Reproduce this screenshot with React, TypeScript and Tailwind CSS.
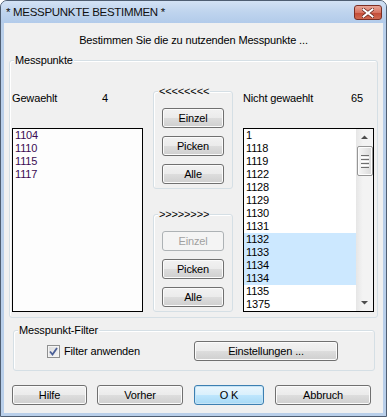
import React from "react";
import clsx from "clsx";

const font = "font-['Liberation_Sans',Arial,sans-serif]";

interface BtnProps {
  children: React.ReactNode;
  className?: string;
  disabled?: boolean;
  primary?: boolean;
}

const Btn = ({ children, className, disabled, primary }: BtnProps) => (
  <div
    className={clsx(
      "flex h-[20px] items-center justify-center rounded-[3px] border text-[11px] leading-none",
      disabled
        ? "border-[#adb2b5] bg-[#f4f4f4] text-[#a0a0a0]"
        : primary
          ? "border-[#3c7fb1] bg-[linear-gradient(180deg,#eaf6fd_0%,#d9f0fc_50%,#bee6fd_51%,#a7d9f5_100%)] text-black shadow-[inset_0_0_0_1px_#c6e4f6]"
          : "border-[#707070] bg-[linear-gradient(180deg,#f2f2f2_0%,#ebebeb_50%,#dddddd_51%,#cfcfcf_100%)] text-black shadow-[inset_0_0_0_1px_#fbfbfb]",
      className
    )}
  >
    {children}
  </div>
);

const Group = ({
  label,
  className,
  children,
}: {
  label: string;
  className?: string;
  children?: React.ReactNode;
}) => (
  <div
    className={clsx(
      "relative rounded-[3px] border border-[#d5dfe5] shadow-[inset_1px_1px_0_#ffffff]",
      className
    )}
  >
    <span className="absolute -top-[7px] left-[4px] bg-[#f0f0f0] px-[1px] text-[11px] leading-[13px] text-black">
      {label}
    </span>
    {children}
  </div>
);

const chosen = ["1104", "1110", "1115", "1117"];
const available = [
  "1", "1118", "1119", "1122", "1128", "1129", "1130", "1131",
  "1132", "1133", "1134", "1134", "1135", "1375",
];

const ArrowPair = ({ label }: { label: string }) => (
  <Group label={label} className="flex h-[98px] flex-col items-center gap-[8px] pt-[16px]">
    {label.startsWith(">") ? (
      <Btn disabled className="w-[62px]">Einzel</Btn>
    ) : (
      <Btn className="w-[62px]">Einzel</Btn>
    )}
    <Btn className="w-[62px]">Picken</Btn>
    <Btn className="w-[62px]">Alle</Btn>
  </Group>
);

const Scrollbar = () => (
  <div className="flex w-[17px] flex-col items-center bg-[linear-gradient(90deg,#e6e6e6_0%,#f3f3f3_40%,#f3f3f3_100%)]">
    <svg width="17" height="17" viewBox="0 0 17 17" className="shrink-0">
      <path d="M5 10 L8.5 6.5 L12 10 Z" fill="#4d4d4d" />
    </svg>
    <div className="flex h-[30px] w-[16px] flex-col items-center justify-center gap-[1px] rounded-[2px] border border-[#969696] bg-[linear-gradient(90deg,#f6f6f6_0%,#e8e8e8_50%,#d9d9d9_100%)] shadow-[inset_0_0_0_1px_#fdfdfd]">
      <div className="h-[1px] w-[8px] bg-[#6f6f6f]" />
      <div className="h-[1px] w-[8px] bg-[#ffffff]" />
      <div className="h-[1px] w-[8px] bg-[#6f6f6f]" />
      <div className="h-[1px] w-[8px] bg-[#ffffff]" />
      <div className="h-[1px] w-[8px] bg-[#6f6f6f]" />
      <div className="h-[1px] w-[8px] bg-[#ffffff]" />
      <div className="h-[1px] w-[8px] bg-[#6f6f6f]" />
    </div>
    <div className="flex-1" />
    <svg width="17" height="17" viewBox="0 0 17 17" className="shrink-0">
      <path d="M5 7 L8.5 10.5 L12 7 Z" fill="#4d4d4d" />
    </svg>
  </div>
);

export default function App() {
  return (
    <div
      className={clsx(
        "flex h-[417px] w-[387px] flex-col rounded-t-[7px] border border-[#4f5e72] bg-[#b9cfea] px-[3px] pb-[3px]",
        font
      )}
    >
      {/* Title bar */}
      <div className="-mx-[3px] flex h-[22px] items-start justify-between rounded-t-[6px] bg-[linear-gradient(180deg,#d3e2f4_0%,#bfd4ee_50%,#b2cbea_100%)] pl-[5px] pr-[4px]">
        <span className="mt-[4px] text-[11.5px] leading-[14px] tracking-[-0.3px] text-[#101010]">
          * MESSPUNKTE BESTIMMEN *
        </span>
        <div className="mt-[4px] flex h-[15px] w-[28px] items-center justify-center rounded-[3px] border border-[#7b2e24] bg-[linear-gradient(180deg,#e8a597_0%,#d77462_50%,#c34a36_51%,#cf6a52_100%)]">
          <svg width="12" height="10" viewBox="0 0 12 10">
            <path
              d="M1.5 1.5 L10.5 8.5 M10.5 1.5 L1.5 8.5"
              stroke="#5a1d16"
              strokeWidth="3.4"
              strokeLinecap="square"
            />
            <path
              d="M1.5 1.5 L10.5 8.5 M10.5 1.5 L1.5 8.5"
              stroke="#ffffff"
              strokeWidth="2"
              strokeLinecap="square"
            />
          </svg>
        </div>
      </div>

      {/* Client */}
      <div className="flex h-[390px] flex-col bg-[#f0f0f0] text-[11px] tracking-[-0.15px] text-black">
        <div className="mt-[11px] h-[13px] text-center leading-[13px]">
          Bestimmen Sie die zu nutzenden Messpunkte ...
        </div>

        <Group label="Messpunkte" className="mx-[5px] mt-[13px] flex h-[258px] gap-[10px] pl-[2px] pr-[3px]">
          {/* Chosen */}
          <div className="flex w-[131px] flex-col pt-[30px]">
            <div className="flex h-[14px] items-center">
              <span className="w-[90px]">Gewaehlt</span>
              <span>4</span>
            </div>
            <div className="mt-[23px] h-[184px] border border-black bg-[#fdfdfd] pl-[2px] leading-[13px] text-[#3b0b52]">
              {chosen.map((c) => (
                <div key={c}>{c}</div>
              ))}
            </div>
          </div>

          {/* Transfer buttons */}
          <div className="flex w-[80px] flex-col gap-[25px] pt-[30px]">
            <ArrowPair label="<<<<<<<<" />
            <ArrowPair label=">>>>>>>>" />
          </div>

          {/* Available */}
          <div className="flex w-[131px] flex-col pt-[30px]">
            <div className="flex h-[14px] items-center">
              <span className="w-[108px]">Nicht gewaehlt</span>
              <span>65</span>
            </div>
            <div className="mt-[23px] flex h-[184px] border border-black bg-white">
              <div className="flex-1 leading-[13px]">
                {available.map((a, i) => (
                  <div
                    key={i}
                    className={clsx("pl-[2px]", i >= 8 && i <= 11 && "bg-[#cce8ff]")}
                  >
                    {a}
                  </div>
                ))}
              </div>
              <Scrollbar />
            </div>
          </div>
        </Group>

        <Group label="Messpunkt-Filter" className="ml-[9px] mr-[8px] mt-[12px] flex h-[41px] items-center pl-[33px] pt-[1px]">
          <div className="flex w-[147px] items-center">
            <div className="flex h-[13px] w-[13px] items-center justify-center border border-[#8e8f8f] bg-[linear-gradient(135deg,#dcdcdc_0%,#f5f5f5_100%)] shadow-[inset_0_0_0_1px_#f4f4f4]">
              <svg width="9" height="9" viewBox="0 0 9 9">
                <path
                  d="M1 4.5 L3.5 7.5 L8 1"
                  fill="none"
                  stroke="#4a5f97"
                  strokeWidth="1.8"
                />
              </svg>
            </div>
            <span className="ml-[4px]">Filter anwenden</span>
          </div>
          <Btn className="w-[144px]">Einstellungen ...</Btn>
        </Group>

        <div className="mt-[14px] flex pl-[8px]">
          <Btn className="w-[75px]">Hilfe</Btn>
          <Btn className="ml-[10px] w-[86px]">Vorher</Btn>
          <Btn primary className="ml-[11px] w-[70px]">O K</Btn>
          <Btn className="ml-[11px] w-[96px]">Abbruch</Btn>
        </div>
      </div>
    </div>
  );
}
